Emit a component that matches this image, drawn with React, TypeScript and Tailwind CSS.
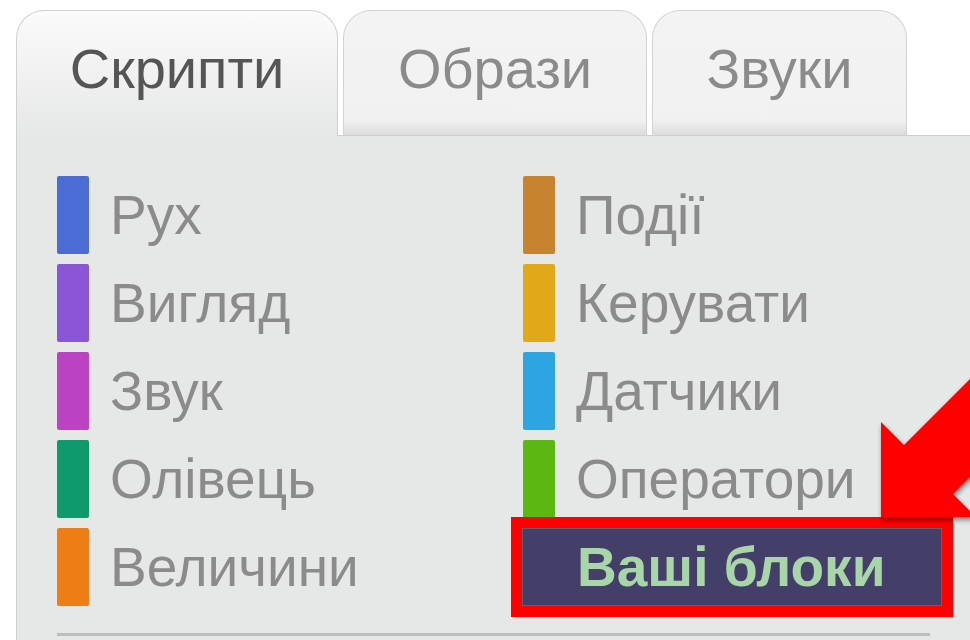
type Category = { name: string; color: string };

const leftColumn: Category[] = [
  { name: "Рух", color: "bg-[#4a6cd4]" },
  { name: "Вигляд", color: "bg-[#8a55d7]" },
  { name: "Звук", color: "bg-[#bb42c3]" },
  { name: "Олівець", color: "bg-[#0e9a6c]" },
  { name: "Величини", color: "bg-[#ee7d16]" },
];

const rightColumn: Category[] = [
  { name: "Події", color: "bg-[#c88330]" },
  { name: "Керувати", color: "bg-[#e1a91a]" },
  { name: "Датчики", color: "bg-[#2ca5e2]" },
  { name: "Оператори", color: "bg-[#5cb712]" },
];

function CategoryRow({ name, color }: Category) {
  return (
    <div className="flex h-[78px] items-center gap-[21px]">
      <div className={`h-full w-[32px] rounded-[2px] ${color}`} />
      <span className="text-[55px] leading-none text-[#8b8b8b]">{name}</span>
    </div>
  );
}

// Red pointer that sits on top of the palette
function PointerArrow() {
  return (
    <svg
      className="pointer-events-none absolute left-0 top-0 h-[640px] w-[970px]"
      viewBox="0 0 970 640"
    >
      <defs>
        <filter id="arrow-shadow" x="-20%" y="-20%" width="140%" height="140%">
          <feDropShadow dx="1" dy="3" stdDeviation="2.5" floodColor="#000" floodOpacity="0.45" />
        </filter>
      </defs>
      <polygon
        points="881,517 881,422 904,445 1150,199 1199,248 953,494 976,517"
        fill="#ff0000"
        filter="url(#arrow-shadow)"
      />
    </svg>
  );
}

export default function App() {
  return (
    <div className="relative flex h-[640px] w-full flex-col overflow-hidden bg-white font-['Liberation_Sans',Arial,sans-serif]">
      {/* tabs */}
      <div className="flex items-end gap-[5px] pl-[16px] pt-[10px]">
        <div className="relative z-10 -mb-px flex h-[126px] w-[322px] items-center justify-center rounded-t-[28px] border border-b-0 border-[#d0d0d0] bg-[linear-gradient(#fbfbfb,#e6e7e7)] pb-[10px]">
          <span className="text-[56px] leading-none text-[#555]">Скрипти</span>
        </div>
        <div className="flex h-[125px] w-[304px] items-center justify-center rounded-t-[28px] border border-b-0 border-[#d3d3d3] bg-[linear-gradient(#f3f3f3_0%,#f1f1f1_88%,#dcdcdc_100%)] pb-[8px]">
          <span className="text-[56px] leading-none text-[#8b8b8b]">Образи</span>
        </div>
        <div className="flex h-[125px] w-[255px] items-center justify-center rounded-t-[28px] border border-b-0 border-[#d3d3d3] bg-[linear-gradient(#f3f3f3_0%,#f1f1f1_88%,#dcdcdc_100%)] pb-[8px]">
          <span className="text-[56px] leading-none text-[#8b8b8b]">Звуки</span>
        </div>
      </div>

      {/* block palette */}
      <div className="ml-[16px] flex-1 border-l border-t border-[#cfcfcf] bg-[#e6e7e7] pl-[40px] pt-[40px]">
        <div className="grid grid-cols-[466px_1fr]">
          <div className="flex flex-col gap-[10px]">
            {leftColumn.map((c) => (
              <CategoryRow key={c.name} {...c} />
            ))}
          </div>
          <div className="flex flex-col gap-[10px]">
            {rightColumn.map((c) => (
              <CategoryRow key={c.name} {...c} />
            ))}
            <div className="-ml-px flex h-[78px] w-[420px] items-center border border-[#5d6370] bg-[#443f68] pl-[54px] outline-[11px] outline-solid outline-[#ff0000]">
              <span className="text-[55px] font-bold leading-none text-[#a9d6a9]">Ваші блоки</span>
            </div>
          </div>
        </div>
        <div className="mt-[27px] h-[3px] w-[873px] bg-[#bdbdbd]" />
      </div>

      <PointerArrow />
    </div>
  );
}
